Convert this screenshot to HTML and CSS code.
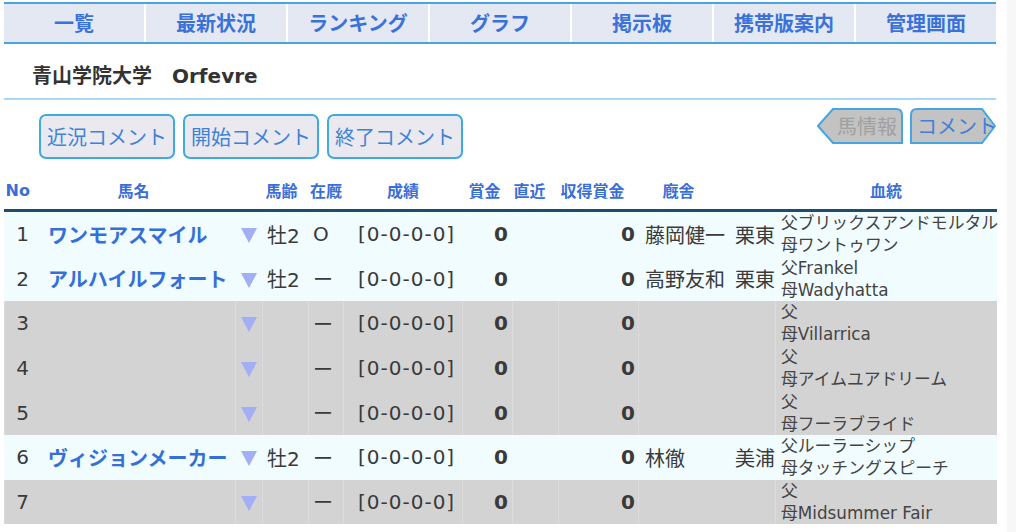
FILE: index.html
```html
<!DOCTYPE html>
<html lang="ja">
<head>
<meta charset="utf-8">
<title>Orfevre</title>
<link rel="stylesheet" href="styles.css">
</head>
<body>
<div class="page">
  <nav class="gnav">
    <a class="gnav-item">一覧</a>
    <a class="gnav-item">最新状況</a>
    <a class="gnav-item">ランキング</a>
    <a class="gnav-item">グラフ</a>
    <a class="gnav-item">掲示板</a>
    <a class="gnav-item">携帯版案内</a>
    <a class="gnav-item">管理画面</a>
  </nav>

  <h1 class="team">青山学院大学　Orfevre</h1>

  <div class="toolbar">
    <div class="btn-group">
      <button class="cbtn">近況コメント</button>
      <button class="cbtn">開始コメント</button>
      <button class="cbtn">終了コメント</button>
    </div>
    <div class="tabs">
      <div class="tab tab-prev">
        <svg class="tab-shape" viewBox="0 0 86 36" width="86" height="36"><path d="M16 1 H79 Q85 1 85 7 V35 H16 L1 18 Z"/></svg>
        <span class="tab-label">馬情報</span>
      </div>
      <div class="tab tab-next">
        <svg class="tab-shape" viewBox="0 0 86 36" width="86" height="36"><path d="M7 1 H72 L85 18 L72 35 H1 V7 Q1 1 7 1 Z"/></svg>
        <span class="tab-label">コメント</span>
      </div>
    </div>
  </div>

  <table class="horses">
    <colgroup>
      <col class="c-no"><col class="c-name"><col class="c-tri"><col class="c-age"><col class="c-stay"><col class="c-rec"><col class="c-prize"><col class="c-recent"><col class="c-earn"><col class="c-trainer"><col class="c-loc"><col class="c-blood">
    </colgroup>
    <thead>
      <tr>
        <th class="h-no">No</th>
        <th class="h-name">馬名</th>
        <th class="h-age" colspan="2">馬齢</th>
        <th>在厩</th>
        <th>成績</th>
        <th class="h-prize">賞金</th>
        <th class="h-recent">直近</th>
        <th class="h-earn">収得賞金</th>
        <th class="h-trainer">廐舎</th>
        <th></th>
        <th>血統</th>
      </tr>
    </thead>
    <tbody>
      <tr class="on">
        <td class="no">1</td><td class="name">ワンモアスマイル</td><td class="tri"><span class="arrow"></span></td><td class="age">牡2</td><td class="stay">O</td><td class="rec">[0-0-0-0]</td><td class="prize">0</td><td></td><td class="earn">0</td><td class="trainer">藤岡健一</td><td class="loc">栗東</td><td class="blood">父ブリックスアンドモルタル<br>母ワントゥワン</td>
      </tr>
      <tr class="on">
        <td class="no">2</td><td class="name">アルハイルフォート</td><td class="tri"><span class="arrow"></span></td><td class="age">牡2</td><td class="stay"><span class="bar">ー</span></td><td class="rec">[0-0-0-0]</td><td class="prize">0</td><td></td><td class="earn">0</td><td class="trainer">高野友和</td><td class="loc">栗東</td><td class="blood">父Frankel<br>母Wadyhatta</td>
      </tr>
      <tr class="off">
        <td class="no">3</td><td class="name"></td><td class="tri"><span class="arrow"></span></td><td class="age"></td><td class="stay"><span class="bar">ー</span></td><td class="rec">[0-0-0-0]</td><td class="prize">0</td><td></td><td class="earn">0</td><td class="trainer"></td><td class="loc"></td><td class="blood">父<br>母Villarrica</td>
      </tr>
      <tr class="off">
        <td class="no">4</td><td class="name"></td><td class="tri"><span class="arrow"></span></td><td class="age"></td><td class="stay"><span class="bar">ー</span></td><td class="rec">[0-0-0-0]</td><td class="prize">0</td><td></td><td class="earn">0</td><td class="trainer"></td><td class="loc"></td><td class="blood">父<br>母アイムユアドリーム</td>
      </tr>
      <tr class="off">
        <td class="no">5</td><td class="name"></td><td class="tri"><span class="arrow"></span></td><td class="age"></td><td class="stay"><span class="bar">ー</span></td><td class="rec">[0-0-0-0]</td><td class="prize">0</td><td></td><td class="earn">0</td><td class="trainer"></td><td class="loc"></td><td class="blood">父<br>母フーラブライド</td>
      </tr>
      <tr class="on">
        <td class="no">6</td><td class="name">ヴィジョンメーカー</td><td class="tri"><span class="arrow"></span></td><td class="age">牡2</td><td class="stay"><span class="bar">ー</span></td><td class="rec">[0-0-0-0]</td><td class="prize">0</td><td></td><td class="earn">0</td><td class="trainer">林徹</td><td class="loc">美浦</td><td class="blood">父ルーラーシップ<br>母タッチングスピーチ</td>
      </tr>
      <tr class="off">
        <td class="no">7</td><td class="name"></td><td class="tri"><span class="arrow"></span></td><td class="age"></td><td class="stay"><span class="bar">ー</span></td><td class="rec">[0-0-0-0]</td><td class="prize">0</td><td></td><td class="earn">0</td><td class="trainer"></td><td class="loc"></td><td class="blood">父<br>母Midsummer Fair</td>
      </tr>
    </tbody>
  </table>
</div>
</body>
</html>
```

FILE: styles.css
```css
html {
  background: #f7f7f7;
}

body {
  margin: 0;
  font-family: "DejaVu Sans", "Noto Sans CJK JP", sans-serif;
  color: #3a3a3a;
}

.page {
  width: 1007px;
  box-sizing: border-box;
  min-height: 532px;
  padding: 2px 11px 0 4px;
  background: #ffffff;
}

/* global navigation */
.gnav {
  display: flex;
  height: 38px;
  background: #e3e8f2;
  border-top: 2px solid #4aa4e4;
  border-bottom: 2px solid #4aa4e4;
}

.gnav-item {
  flex: 1;
  text-align: center;
  line-height: 38px;
  font-size: 20px;
  font-weight: bold;
  color: #3a72da;
  font-family: "Noto Sans CJK JP", sans-serif;
}

.gnav-item + .gnav-item {
  border-left: 2px solid #ffffff;
}

/* team title */
.team {
  margin: 0;
  height: 44px;
  padding: 10px 0 0 28px;
  line-height: 44px;
  font-size: 20px;
  font-weight: bold;
  color: #333333;
  border-bottom: 2px solid #a9d8f6;
}

/* toolbar */
.toolbar {
  display: flex;
  align-items: flex-start;
  height: 59px;
}

.btn-group {
  display: flex;
  gap: 8px;
  padding: 14px 0 0 35px;
}

.cbtn {
  width: 136px;
  height: 45px;
  padding: 0;
  border: 2px solid #3faade;
  border-radius: 7px;
  background: #e9e9ef;
  color: #3f82d6;
  font-family: "Noto Sans CJK JP", sans-serif;
  font-size: 20px;
  line-height: 41px;
}

.tabs {
  margin-left: auto;
  display: flex;
  gap: 7px;
  padding-top: 8px;
}

.tab {
  position: relative;
  width: 86px;
  height: 36px;
  font-family: "Noto Sans CJK JP", sans-serif;
  font-size: 20px;
  line-height: 36px;
  white-space: nowrap;
}

.tab-shape {
  position: absolute;
  left: 0;
  top: 0;
}

.tab-shape path {
  fill: #c3c3c3;
  stroke: #45a6e0;
  stroke-width: 2;
}

.tab-label {
  position: relative;
}

.tab-prev {
  padding-left: 20px;
  box-sizing: border-box;
  color: #a0a0a0;
}

.tab-next {
  padding-left: 7px;
  box-sizing: border-box;
  color: #3f7fd8;
}

/* table */
.horses {
  width: 992px;
  margin-top: 12px;
  table-layout: fixed;
  border-collapse: collapse;
}

.c-no { width: 36px; }
.c-name { width: 195px; }
.c-tri { width: 27px; }
.c-age { width: 46px; }
.c-stay { width: 35px; }
.c-rec { width: 119px; }
.c-prize { width: 50px; }
.c-recent { width: 46px; }
.c-earn { width: 80px; }
.c-trainer { width: 90px; }
.c-loc { width: 47px; }
.c-blood { width: 221px; }

.horses th {
  height: 38px;
  padding: 0;
  font-size: 16px;
  font-weight: bold;
  color: #3a6fd8;
  text-align: center;
  white-space: nowrap;
  border-bottom: 3px solid #1f4c69;
  font-family: "DejaVu Sans", "Noto Sans CJK JP", sans-serif;
}

.horses th.h-no { text-align: left; padding-left: 1px; }
.horses th.h-name { padding-right: 9px; }
.horses th.h-age { text-align: right; padding-right: 11px; }
.horses th.h-prize { padding-right: 6px; }
.horses th.h-recent { text-align: left; padding-left: 1px; }
.horses th.h-earn { text-align: left; padding-left: 2px; }
.horses th.h-trainer { padding-right: 10px; }

.horses td {
  height: 44.6px;
  padding: 0;
  font-size: 20px;
  white-space: nowrap;
  vertical-align: middle;
  border-left: 1px solid transparent;
}

.horses tr.on td { background: #f1fcfe; border-left-color: #f4fdfe; }
.horses tr.off td { background: #d3d3d3; border-left-color: #dcdcdc; }
.horses tr td.name,
.horses tr td.loc { border-left-color: transparent; }
.horses tr.off td.name,
.horses tr.off td.loc { border-left-color: #d3d3d3; }

.no { text-align: center; }

.name {
  padding-left: 7px !important;
  font-weight: bold;
  color: #3570d8;
  font-family: "Noto Sans CJK JP", sans-serif;
}

.tri { text-align: center; }

.arrow {
  display: inline-block;
  width: 0;
  height: 0;
  border-left: 8.5px solid transparent;
  border-right: 8.5px solid transparent;
  border-top: 15px solid #a2aff5;
  vertical-align: middle;
}

.age { padding-left: 4px !important; }
.stay { padding-left: 4px !important; }
.bar { font-family: "Noto Sans CJK JP", sans-serif; }

.rec {
  padding-left: 14px !important;
  letter-spacing: 1px;
}

.prize,
.earn {
  text-align: right;
  font-weight: bold;
}

.prize { padding-right: 4px !important; }
.earn { padding-right: 3px !important; }

.trainer { padding-left: 6px !important; }
.loc { text-align: right; }

.blood {
  padding-left: 5px !important;
  font-size: 16.8px !important;
  line-height: 22px;
  color: #444444;
  overflow: visible;
}
```
